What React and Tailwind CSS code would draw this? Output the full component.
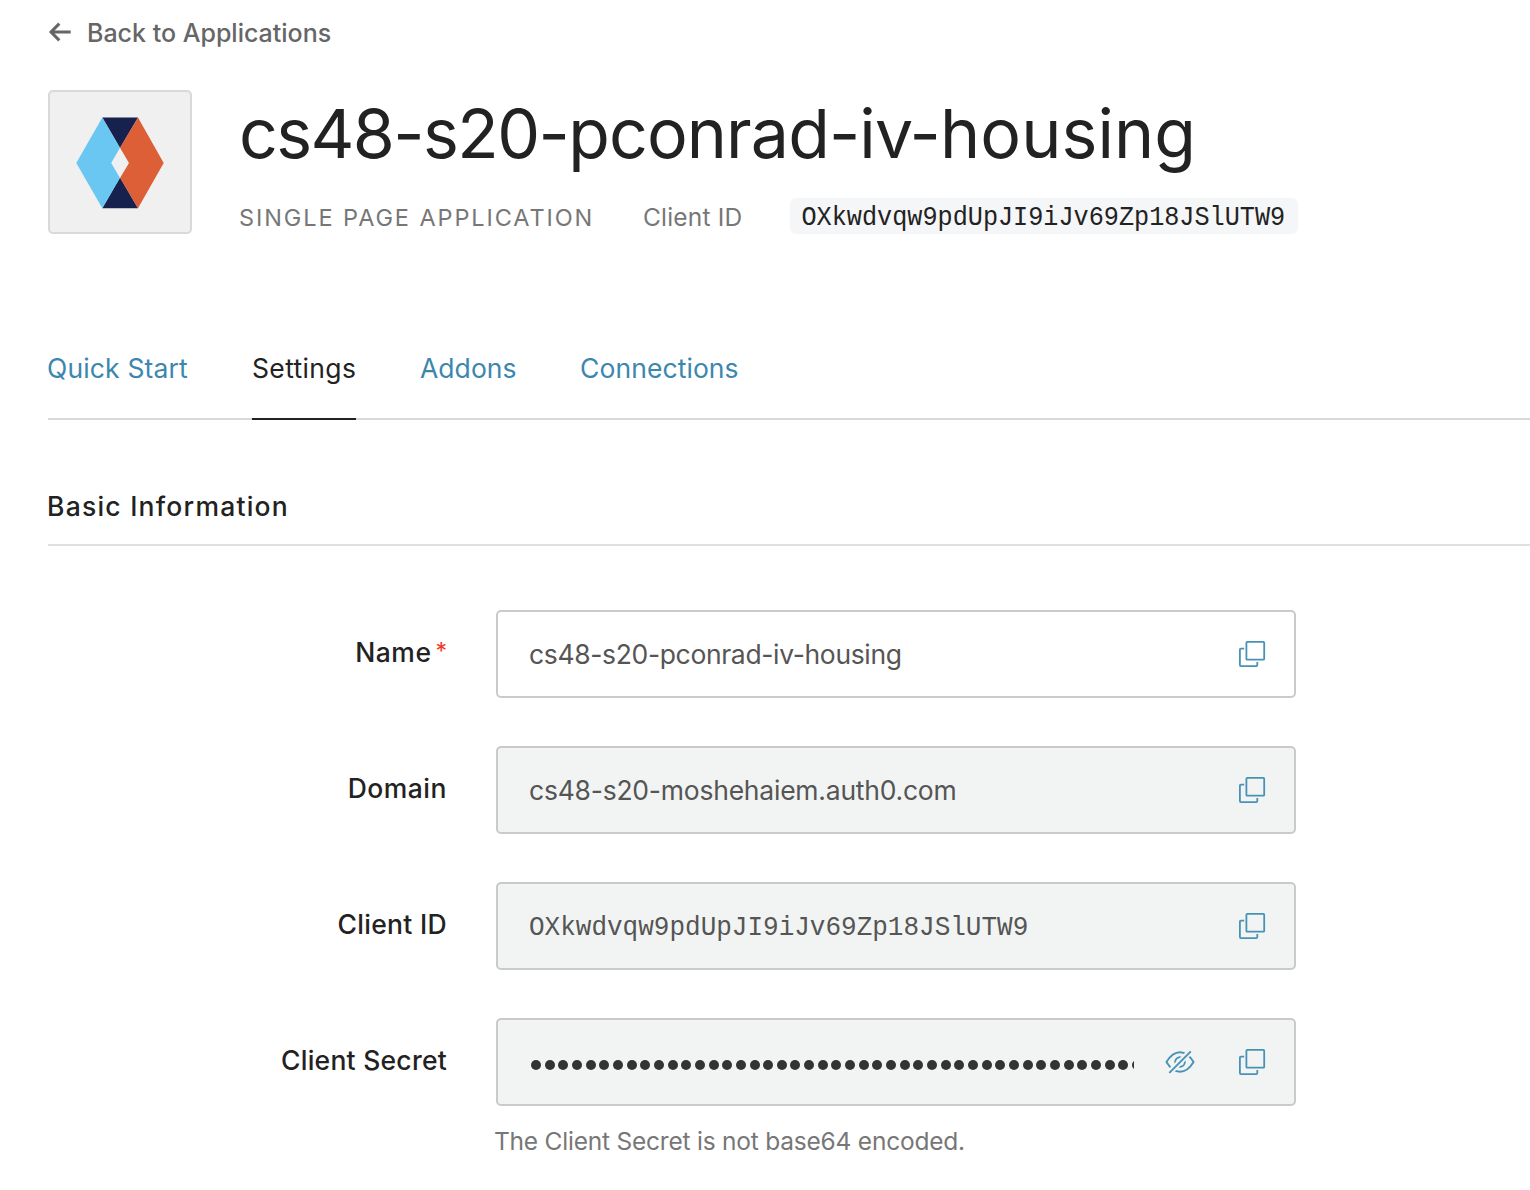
import React from "react";

const CLIENT_ID = "OXkwdvqw9pdUpJI9iJv69Zp18JSlUTW9";

function ArrowLeft() {
  return (
    <svg className="mr-[16px] mb-[3px] h-[20px] w-[23px] shrink-0" viewBox="0 0 23 20" fill="none" stroke="#666" strokeWidth="3">
      <path d="M11.3 1.6 3 10l8.3 8.4M3 10H22.7" />
    </svg>
  );
}

function AppLogo() {
  return (
    <svg className="h-[92px] w-[88px]" viewBox="0 0 88 92">
      <path d="M26.3 0.5H62L44 31ZM26.3 91.3H62L44 60.5Z" fill="#16214d" />
      <path d="M26.3 0.5 44 30.7 35.2 46 44 61 26.3 91.3 0.3 46Z" fill="#69c7f2" />
      <path d="M62 0.5 87.7 46 62 91.3 44 61 53 46 44 30.7Z" fill="#dc5f37" />
    </svg>
  );
}

function CopyIcon() {
  return (
    <svg className="h-[28px] w-[28px] shrink-0" viewBox="0 0 28 28" fill="none" stroke="#4792b5" strokeWidth="1.8">
      <rect x="8.4" y="1.9" width="17.8" height="17.8" rx="0.8" />
      <path d="M6.2 8.6H2.9a1 1 0 0 0-1 1V25.1a1 1 0 0 0 1 1H18.3a1 1 0 0 0 1-1V22" />
    </svg>
  );
}

function EyeOffIcon() {
  return (
    <svg className="h-[24px] w-[30px] shrink-0" viewBox="0 0 30 24" fill="none" stroke="#4792b5" strokeWidth="1.9">
      <path d="M1.4 12C5 6.2 9.6 2.2 15 2.2S25 6.2 28.6 12C25 17.8 20.4 21.8 15 21.8S5 17.8 1.4 12Z" strokeLinejoin="round" />
      <circle cx="15" cy="12" r="4.8" />
      <path d="M3.5 23.5 26.5.5" stroke="#f2f4f3" strokeWidth="6" />
      <path d="M4.3 22.8 25.8 1.3" />
    </svg>
  );
}

function SecretDots() {
  return (
    <div className="mt-[6px] mr-[31px] flex w-[605px] gap-[3.67px] overflow-hidden pl-[2px]">
      {Array.from({ length: 45 }, (_, i) => (
        <span key={i} className="size-[10px] shrink-0 rounded-full bg-[#333]" />
      ))}
    </div>
  );
}

function Field({ label, labelClass, required, editable, children }) {
  return (
    <div className="flex h-[88px]">
      <div className={"flex w-[448px] justify-end pt-[24px] pr-[49px] text-[26.5px] leading-[37px] font-medium text-[#222] " + labelClass}>
        {label}
        {required && <span className="-mt-[1px] ml-[4px] text-[23px] font-normal tracking-normal text-[#f0382b]">*</span>}
      </div>
      <div className={"flex w-[800px] items-center rounded-[5px] border-2 border-[#c9cacb] pr-[28px] pl-[31px] text-[26.5px] text-[#555] " + (editable ? "bg-white" : "bg-[#f2f4f3]")}>
        {children}
        <div className="ml-auto flex">
          <CopyIcon />
        </div>
      </div>
    </div>
  );
}

export default function App() {
  return (
    <div className="h-[1190px] w-full overflow-hidden bg-white pl-[48px] font-['Inter',sans-serif] text-[#222]">
      <a className="flex h-[66px] items-center pt-[1px] text-[25px] font-medium text-[#666]">
        <ArrowLeft />
        Back to Applications
      </a>

      <header className="mt-[24px] flex h-[144px]">
        <div className="flex size-[144px] items-center justify-center rounded-[5px] border-2 border-[#d9d9d9] bg-[#f0f0f0] pt-[2px]">
          <AppLogo />
        </div>
        <div className="ml-[47px]">
          <h1 className="h-[108px] text-[68px] leading-[87px] tracking-[-0.87px] whitespace-nowrap">
            <span className="tracking-[-1.6px]">cs48-s20-</span>pconrad-iv-<span className="tracking-[0.1px]">housing</span>
          </h1>
          <div className="flex h-[36px] items-center text-[#777]">
            <span className="w-[404px] pt-[3px] text-[23.5px] tracking-[1.9px]">SINGLE PAGE APPLICATION</span>
            <span className="w-[147px] pt-[2px] text-[24.5px] tracking-[0.2px]">Client ID</span>
            <code className="flex h-[36px] w-[508px] items-center rounded-[6px] bg-[#f5f6f8] pt-[5px] pl-[11.5px] text-[#222]">
              <span className="scale-y-[1.08] font-['Liberation_Mono',monospace] text-[25.2px]">{CLIENT_ID}</span>
            </code>
          </div>
        </div>
      </header>

      <nav className="mt-[84px] flex h-[102px] gap-[64px] border-b-2 border-[#d9d9d9] text-[26.5px] leading-[100px] whitespace-nowrap text-[#3b87ae]">
        <a className="-ml-[1px] w-[141px] tracking-[0.15px]">Quick Start</a>
        <a className="h-[102px] w-[104px] border-b-2 border-[#222] tracking-[0.35px] text-[#222]">Settings</a>
        <a className="w-[96px] tracking-[0.05px]">Addons</a>
        <a className="tracking-[0.08px]">Connections</a>
      </nav>

      <h2 className="mt-[68px] h-[58px] border-b-2 border-[#e0e0e0] text-[26.5px] leading-[36px] font-medium tracking-[1.23px]">
        <span className="-ml-[1px]">Basic Information</span>
      </h2>

      <main className="mt-[64px] flex flex-col gap-[48px]">
        <Field label="Name" labelClass="tracking-[0.5px]" required editable>
          <span className="pt-[2px] tracking-[-0.35px]">cs48-s20-pconrad-iv-housing</span>
        </Field>
        <Field label="Domain" labelClass="tracking-[0.5px]">
          <span className="pt-[2px] tracking-[-0.23px]">cs48-s20-moshehaiem.auth0.com</span>
        </Field>
        <Field label="Client ID" labelClass="tracking-[0.3px]">
          <span className="scale-y-[1.08] pt-[3px] font-['Liberation_Mono',monospace] text-[26px]">{CLIENT_ID}</span>
        </Field>
        <Field label="Client Secret" labelClass="tracking-[0.25px]">
          <SecretDots />
          <EyeOffIcon />
        </Field>
      </main>

      <p className="mt-[17px] ml-[446px] text-[24.5px] leading-[36px] tracking-[-0.22px] text-[#777]">The Client Secret is not base64 encoded.</p>
    </div>
  );
}
